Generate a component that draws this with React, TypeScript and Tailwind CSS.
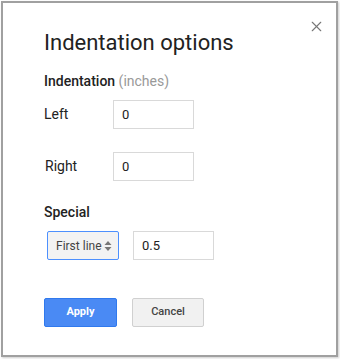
import { X } from 'lucide-react'

// Indentation options dialog
export default function App() {
  return (
    <div className="w-[340px] h-[359px] bg-white p-px" style={{ fontFamily: 'Roboto, Arial, sans-serif' }}>
      <div className="relative w-[337px] h-[356px] border-2 border-[#a0a0a0] bg-white pl-[41px] pt-[27px] shadow-[1px_1px_2px_rgba(0,0,0,0.2)]">
        <button className="absolute right-[11px] top-[15px] text-[#777]">
          <X className="w-[17px] h-[17px]" strokeWidth={1.6} />
        </button>

        <h1 className="text-[22px] leading-[26px] text-[#222]">Indentation options</h1>

        <div className="mt-[16px] text-[14px] leading-[18px] font-medium text-[#222]">
          Indentation <span className="font-normal text-[#999]">(inches)</span>
        </div>

        <div className="mt-[10px] flex items-center">
          <span className="w-[69px] text-[14px] text-[#222]">Left</span>
          <div className="w-[81px] h-[29px] border border-[#d9d9d9] px-[8px] flex items-center text-[13px] text-[#222]">0</div>
        </div>

        <div className="mt-[23px] flex items-center">
          <span className="w-[69px] pl-px text-[14px] text-[#222]">Right</span>
          <div className="w-[81px] h-[29px] border border-[#d9d9d9] px-[8px] flex items-center text-[13px] text-[#222]">0</div>
        </div>

        <div className="mt-[22px] text-[14px] leading-[18px] font-medium text-[#222]">Special</div>

        <div className="mt-[10px] flex items-center">
          <div className="ml-[3px] w-[72px] h-[29px] border border-[#4d90fe] bg-[#f3f3f3] rounded-[2px] pl-[8px] pr-[6px] flex items-center justify-between text-[12px] text-[#444]">
            <span>First line</span>
            <svg width="8" height="12" viewBox="0 0 8 12" className="text-[#777]">
              <path d="M4 1 L7.5 5 L0.5 5 Z" fill="currentColor" />
              <path d="M4 11 L7.5 7 L0.5 7 Z" fill="currentColor" />
            </svg>
          </div>
          <div className="ml-[14px] w-[81px] h-[29px] border border-[#d9d9d9] px-[8px] flex items-center text-[13px] text-[#222]">0.5</div>
        </div>

        <div className="mt-[38px] flex items-center gap-[15px]">
          <button className="w-[73px] h-[29px] rounded-[2px] bg-[#4a8af4] border border-[#3079ed] text-white text-[11px] font-bold">Apply</button>
          <button className="w-[72px] h-[29px] rounded-[2px] bg-[#f1f1f1] border border-[#d0d0d0] text-[#444] text-[11px] font-medium">Cancel</button>
        </div>
      </div>
    </div>
  )
}
